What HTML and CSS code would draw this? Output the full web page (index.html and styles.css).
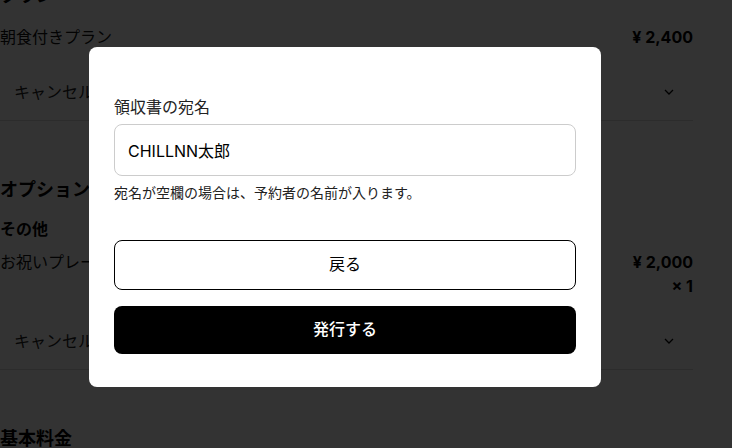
FILE: index.html
```html
<!DOCTYPE html>
<html lang="ja">
<head>
<meta charset="utf-8">
<title>領収書の宛名</title>
<link rel="stylesheet" href="styles.css">
</head>
<body>
<div class="page">
  <h2 class="section-title">プラン</h2>
  <div class="item-row first">
    <span class="item-name">朝食付きプラン</span>
    <span class="item-price">¥ 2,400</span>
  </div>
  <div class="cancel-row">
    <span>キャンセルポリシー</span>
    <svg class="chev" width="10" height="6" viewBox="0 0 10 6"><path d="M1 1l4 4 4-4" fill="none" stroke="#000" stroke-width="1.3"/></svg>
  </div>
  <h2 class="section-title spaced">オプション</h2>
  <h3 class="sub-title">その他</h3>
  <div class="item-row opt">
    <span class="item-name">お祝いプレート</span>
    <span class="item-price-col"><span class="item-price">¥ 2,000</span><span class="item-price">× 1</span></span>
  </div>
  <div class="cancel-row">
    <span>キャンセルポリシー</span>
    <svg class="chev" width="10" height="6" viewBox="0 0 10 6"><path d="M1 1l4 4 4-4" fill="none" stroke="#000" stroke-width="1.3"/></svg>
  </div>
  <h2 class="section-title spaced">基本料金</h2>
</div>

<div class="overlay">
  <div class="modal">
    <label class="field-label" for="addressee">領収書の宛名</label>
    <div class="input-box" id="addressee">CHILLNN太郎</div>
    <p class="hint">宛名が空欄の場合は、予約者の名前が入ります。</p>
    <button class="btn btn-back">戻る</button>
    <button class="btn btn-issue">発行する</button>
  </div>
</div>
</body>
</html>
```

FILE: styles.css
```css
* { box-sizing: border-box; }
html, body {
  margin: 0;
  padding: 0;
  background: #fff;
  font-family: "Inter", "Noto Sans CJK JP", sans-serif;
  color: #000;
  overflow: hidden;
  height: 448px;
}
.page {
  width: 693px;
  margin-top: -18px;
}
.section-title {
  margin: 0;
  font-size: 18px;
  line-height: 28px;
  font-weight: 700;
}
.section-title.spaced { margin-top: 55px; }
.sub-title {
  margin: 13px 0 0;
  font-size: 16px;
  line-height: 24px;
  font-weight: 700;
}
.item-row {
  display: flex;
  justify-content: space-between;
  align-items: flex-start;
  font-size: 16px;
  line-height: 24px;
}
.item-row.first { margin-top: 15px; }
.item-row.opt { margin-top: 9px; }
.item-name { color: #111; }
.item-price { font-weight: 700; font-size: 16px; }
.item-price-col {
  display: flex;
  flex-direction: column;
  align-items: flex-end;
}
.cancel-row {
  margin-top: 31px;
  display: flex;
  justify-content: space-between;
  align-items: center;
  padding: 0 19px 16px 14px;
  font-size: 16px;
  line-height: 24px;
  color: #222;
  border-bottom: 1px solid #ddd;
}
.chev { display: block; }

.overlay {
  position: fixed;
  inset: 0;
  background: rgba(0, 0, 0, 0.8);
}
.modal {
  margin: 47px 0 0 89px;
  width: 512px;
  height: 340px;
  background: #fff;
  border-radius: 8px;
  padding: 49px 25px 0;
  display: flex;
  flex-direction: column;
}
.field-label {
  font-size: 16px;
  line-height: 22px;
  color: #222;
}
.input-box {
  margin-top: 6px;
  height: 52px;
  border: 1px solid #ccc;
  border-radius: 8px;
  padding: 0 13px;
  display: flex;
  align-items: center;
  font-size: 16px;
  color: #000;
}
.hint {
  margin: 7px 0 0;
  font-size: 14px;
  line-height: 20px;
  color: #222;
}
.btn {
  font-family: inherit;
  font-size: 16px;
  line-height: 20px;
  border-radius: 8px;
  width: 100%;
  display: block;
  cursor: pointer;
  padding: 0 0 3px;
}
.btn-back {
  margin-top: 37px;
  height: 50px;
  border: 1px solid #000;
  background: #fff;
  color: #000;
}
.btn-issue {
  margin-top: 16px;
  height: 48px;
  border: none;
  background: #000;
  color: #fff;
  font-weight: 500;
}
```
